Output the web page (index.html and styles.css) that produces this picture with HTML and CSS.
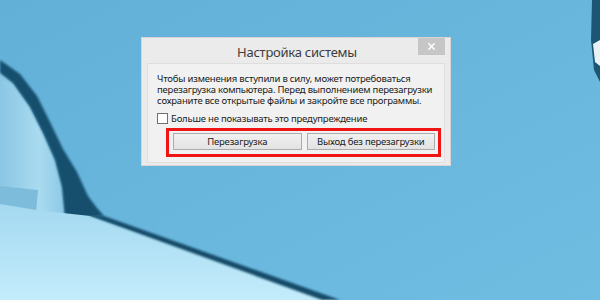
FILE: index.html
```html
<!DOCTYPE html>
<html lang="ru">
<head>
  <meta charset="UTF-8" />
  <title>Настройка системы</title>
  <link rel="stylesheet" href="styles.css">
</head>
<body>
  <svg class="wallpaper" viewBox="0 0 600 300" width="600" height="300">
    <defs>
      <linearGradient id="sky" x1="0" y1="0" x2="1" y2="1">
        <stop offset="0" stop-color="#62b0d8" />
        <stop offset="1" stop-color="#70bde2" />
      </linearGradient>
      <linearGradient id="floor" x1="0" y1="0" x2="0" y2="1">
        <stop offset="0" stop-color="#a4d9f1" />
        <stop offset="1" stop-color="#c3ecfb" />
      </linearGradient>
      <linearGradient id="curl" x1="0" y1="0" x2="1" y2="0">
        <stop offset="0" stop-color="#8ac6e4" />
        <stop offset="0.6" stop-color="#a9dbf0" />
        <stop offset="1" stop-color="#8cc8e6" />
      </linearGradient>
      <filter id="soft"><feGaussianBlur stdDeviation="1" /></filter>
    </defs>
    <rect width="600" height="300" fill="url(#sky)" />
    <!-- light paper left of the dark fold -->
    <path d="M0 72 L13 83 L30 107 L43 133 L55 160 L62 187 L65 216 L0 206 Z" fill="url(#curl)" />
    <path d="M0 186 L38 190 L36 212 L0 206 Z" fill="#7ebcdc" />
    <!-- dark fold -->
    <path d="M0 60 L20 74 L37 96 L50 122 L63 149 L77 172 L88 196 L97 208 L104 216 L65 218 L62 187 L55 160 L43 133 L30 107 L13 83 L0 73 Z" fill="#174f6e" filter="url(#soft)" />
    <!-- lower light sheet -->
    <path d="M0 204 L36 210 L90 216 L335 300 L0 300 Z" fill="url(#floor)" />
    <path d="M88 215 L104 216 L340 300 L322 300 Z" fill="#164b69" filter="url(#soft)" />
    <!-- top right corner object -->
    <path d="M592 0 L600 0 L600 82 L594 70 L591 40 Z" fill="#1d5675" />
    <path d="M593 44 L600 40 L600 66 L595 62 Z" fill="#e8f1f5" />
  </svg>

  <div class="dialog">
    <div class="dialog-title">
      <span class="title-text">Настройка системы</span>
      <span class="close-btn">
        <svg viewBox="0 0 10 10" width="9" height="9">
          <path d="M1.5 1.5 L8.5 8.5 M8.5 1.5 L1.5 8.5" stroke="#fff" stroke-width="1.6" />
        </svg>
      </span>
    </div>
    <div class="dialog-body">
      <p class="message">Чтобы изменения вступили в силу, может потребоваться перезагрузка компьютера. Перед выполнением перезагрузки сохраните все открытые файлы и закройте все программы.</p>
      <label class="check-row">
        <span class="check-box"></span>
        Больше не показывать это предупреждение
      </label>
      <div class="highlight">
        <button class="btn">Перезагрузка</button>
        <button class="btn">Выход без перезагрузки</button>
      </div>
    </div>
  </div>
</body>
</html>
```

FILE: styles.css
```css
body {
  margin: 0;
  width: 600px;
  height: 300px;
  overflow: hidden;
  position: relative;
  font-family: 'Noto Sans', 'Open Sans', sans-serif;
  background: #66b5dc;
}

.wallpaper {
  position: absolute;
  left: 0;
  top: 0;
  display: block;
}

.dialog {
  position: absolute;
  left: 141px;
  top: 37px;
  width: 310px;
  height: 129px;
  box-sizing: border-box;
  background-color: #ebebeb;
  border: 1px solid #d9d4d4;
  padding: 0 5px 2px 5px;
  display: flex;
  flex-direction: column;
}

.dialog-title {
  height: 25px;
  display: flex;
  align-items: flex-start;
  justify-content: center;
  position: relative;
}

.title-text {
  margin-top: 4px;
  margin-left: 2px;
  font-size: 13px;
  letter-spacing: -0.25px;
  color: #3c3c3c;
  line-height: 20px;
}

.close-btn {
  position: absolute;
  right: 0;
  top: 0;
  width: 27px;
  height: 17px;
  background-color: #c6c6c6;
  display: flex;
  align-items: center;
  justify-content: center;
}

.dialog-body {
  flex: 1;
  background-color: #f1f1f1;
  border: 1px solid #dedede;
  padding: 9px 0 0 9px;
}

.message {
  margin: 0;
  width: 285px;
  font-size: 9.5px;
  letter-spacing: -0.2px;
  line-height: 11px;
  color: #1a1a1a;
}

.check-row {
  display: flex;
  align-items: center;
  margin-top: 6px;
  height: 12px;
  font-size: 9.5px;
  letter-spacing: -0.2px;
  color: #1a1a1a;
}

.check-box {
  width: 9px;
  height: 9px;
  border: 1px solid #707070;
  background-color: #fff;
  margin-right: 3px;
}

.highlight {
  margin: 4px 0 0 9px;
  width: 275px;
  height: 29px;
  box-sizing: border-box;
  border: 3px solid #f01414;
  padding: 2px 3px 0 4px;
  display: flex;
  gap: 5px;
}

.btn {
  width: 129px;
  height: 17px;
  padding: 0;
  border: 1px solid #acacac;
  background: linear-gradient(#f0f0f0, #e3e3e3);
  font-family: inherit;
  font-size: 9.5px;
  letter-spacing: -0.2px;
  color: #1a1a1a;
}
```
